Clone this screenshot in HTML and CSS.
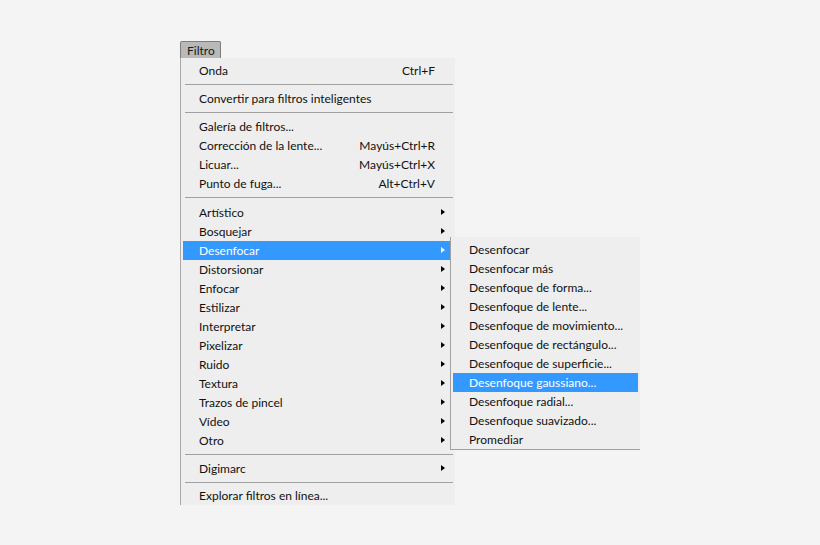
FILE: index.html
```html
<!DOCTYPE html>
<html lang="es">
<head>
    <meta charset="UTF-8">
    <title>Filtro</title>
    <link rel="stylesheet" href="styles.css">
</head>
<body>
    <div class="menubar">
        <span class="menu-tab">Filtro</span>
    </div>

    <!-- Filtro menu -->
    <ul class="menu">
        <li class="item"><span>Onda</span><span class="shortcut">Ctrl+F</span></li>
        <li class="sep"></li>
        <li class="item"><span>Convertir para filtros inteligentes</span></li>
        <li class="sep"></li>
        <li class="item"><span>Galería de filtros...</span></li>
        <li class="item"><span>Corrección de la lente...</span><span class="shortcut">Mayús+Ctrl+R</span></li>
        <li class="item"><span>Licuar...</span><span class="shortcut">Mayús+Ctrl+X</span></li>
        <li class="item"><span>Punto de fuga...</span><span class="shortcut">Alt+Ctrl+V</span></li>
        <li class="sep sep-wide"></li>
        <li class="item sub"><span>Artístico</span></li>
        <li class="item sub"><span>Bosquejar</span></li>
        <li class="item sub active"><span>Desenfocar</span>
            <ul class="menu submenu">
                <li class="item"><span>Desenfocar</span></li>
                <li class="item"><span>Desenfocar más</span></li>
                <li class="item"><span>Desenfoque de forma...</span></li>
                <li class="item"><span>Desenfoque de lente...</span></li>
                <li class="item"><span>Desenfoque de movimiento...</span></li>
                <li class="item"><span>Desenfoque de rectángulo...</span></li>
                <li class="item"><span>Desenfoque de superficie...</span></li>
                <li class="item active"><span>Desenfoque gaussiano...</span></li>
                <li class="item"><span>Desenfoque radial...</span></li>
                <li class="item"><span>Desenfoque suavizado...</span></li>
                <li class="item"><span>Promediar</span></li>
            </ul>
        </li>
        <li class="item sub"><span>Distorsionar</span></li>
        <li class="item sub"><span>Enfocar</span></li>
        <li class="item sub"><span>Estilizar</span></li>
        <li class="item sub"><span>Interpretar</span></li>
        <li class="item sub"><span>Pixelizar</span></li>
        <li class="item sub"><span>Ruido</span></li>
        <li class="item sub"><span>Textura</span></li>
        <li class="item sub"><span>Trazos de pincel</span></li>
        <li class="item sub"><span>Vídeo</span></li>
        <li class="item sub"><span>Otro</span></li>
        <li class="sep"></li>
        <li class="item sub"><span>Digimarc</span></li>
        <li class="sep sep-narrow"></li>
        <li class="item"><span>Explorar filtros en línea...</span></li>
    </ul>
</body>
</html>
```

FILE: styles.css
```css
* {
    margin: 0;
    padding: 0;
    box-sizing: border-box;
}

body {
    background-color: #f4f4f4;
    font-family: Lato, "Liberation Sans", sans-serif;
    font-size: 12px;
    color: #111;
    padding: 41px 0 0 180px;
}

/* Menu bar tab */
.menubar {
    display: flex;
    height: 17px;
}

.menu-tab {
    display: flex;
    align-items: center;
    width: 41px;
    padding-left: 6px;
    background-color: #b9b9b9;
    border: 1px solid #7d7d7d;
    border-bottom: none;
    border-radius: 2px 2px 0 0;
    color: #1a1a1a;
}

/* Menu panel */
.menu {
    list-style: none;
    width: 275px;
    padding: 3px 2px 0 2px;
    background-color: #eeeeee;
    border-left: 1px solid #a9a9a9;
}

.item {
    position: relative;
    display: flex;
    justify-content: space-between;
    align-items: center;
    height: 19px;
    padding: 0 17px 0 16px;
    white-space: nowrap;
}

.shortcut {
    padding-right: 1px;
}

.sub::after {
    content: "";
    position: absolute;
    right: 8px;
    top: 6px;
    border-left: 4px solid #000;
    border-top: 3.5px solid transparent;
    border-bottom: 3.5px solid transparent;
}

.item.active {
    background-color: #3399ff;
    color: #fff;
}

.item.active::after {
    border-left-color: #fff;
}

.sep {
    height: 1px;
    margin: 4px 0 4px 2px;
    background-color: #a0a0a0;
}

.sep-wide {
    margin-bottom: 5px;
}

.sep-narrow {
    margin-bottom: 3px;
}

/* Desenfocar submenu */
.submenu {
    position: absolute;
    left: 267px;
    top: -4px;
    width: 190px;
    padding: 3px 2px 0 2px;
    border-left: 1px solid #a0a0a0;
    border-bottom: 1px solid #a0a0a0;
    color: #111;
}
```
